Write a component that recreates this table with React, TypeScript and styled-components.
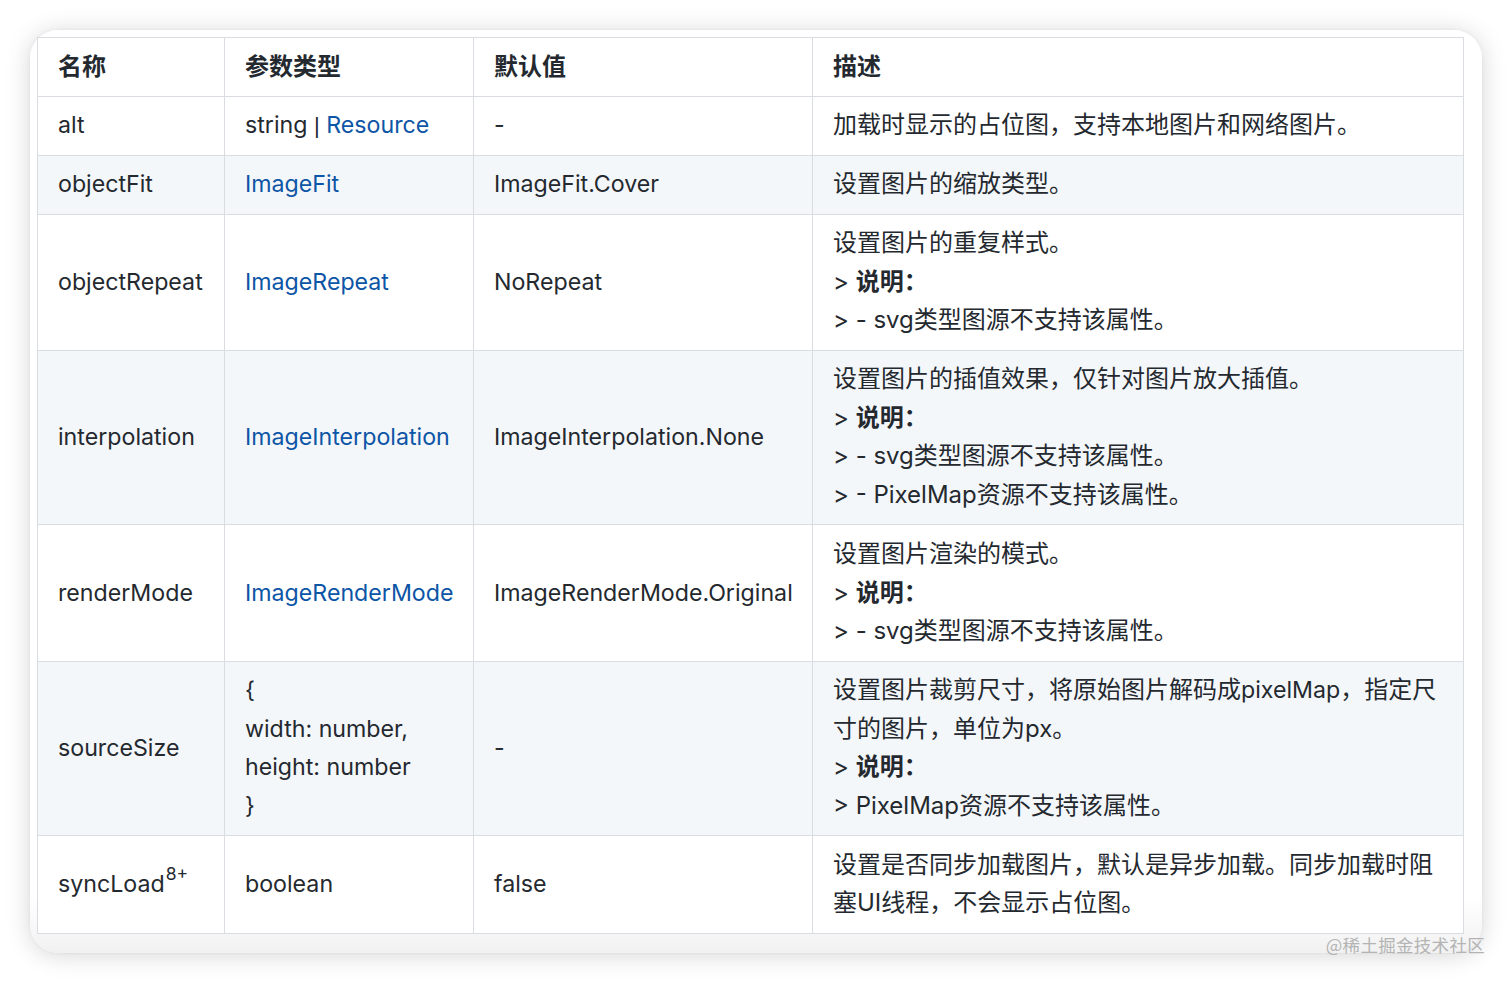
import React from "react";
import styled, { createGlobalStyle } from "styled-components";

const Global = createGlobalStyle`
  html, body { margin: 0; padding: 0; background: #ffffff; }
  body { font-family: Inter, "Noto Sans CJK SC", sans-serif; }
`;

const Page = styled.div`
  width: 1512px;
  height: 984px;
  padding: 30px 0 0 30px;
  box-sizing: border-box;
  background: #ffffff;
`;

const Card = styled.div`
  position: relative;
  width: 1452px;
  height: 923px;
  box-sizing: border-box;
  padding: 7px 19px 20px 7px;
  border-radius: 28px;
  background: linear-gradient(to bottom, #ffffff 0%, #ffffff 94%, #f1f1f1 100%);
  box-shadow: 0 2px 24px rgba(0, 0, 0, 0.17), 0 0 3px rgba(0, 0, 0, 0.06);
`;

const Table = styled.table`
  width: 1426px;
  border-collapse: collapse;
  table-layout: fixed;
  color: #24292f;
  font-family: Inter, "Noto Sans CJK SC", sans-serif;
  font-size: 23.2px;
  line-height: 38.6px;
`;

const Row = styled.tr<{ $striped?: boolean }>`
  background: ${(p) => (p.$striped ? "#f4f7fa" : "#ffffff")};
`;

const Th = styled.th`
  text-align: left;
  font-weight: 700;
  font-size: 24px;
  padding: 9.5px 20px 9.8px 20px;
  border: 1px solid #d9dde2;
  color: #24292f;
`;

const Td = styled.td`
  padding: 9.5px 20px 9.8px 20px;
  border: 1px solid #d9dde2;
  vertical-align: middle;
  white-space: nowrap;
`;

const DescTd = styled(Td)`
  white-space: normal;
  font-size: 24px;
`;

const Line = styled.div``;

const Latin = styled.span`
  font-size: 23.2px;
  line-height: 1;
`;

const Link = styled.span`
  color: #0d55a6;
`;

const Bar = styled.span`
  font-family: "Liberation Sans", sans-serif;
  font-size: 22px;
  line-height: 1;
`;

const Strong = styled.strong`
  font-weight: 700;
`;

const Sup = styled.sup`
  font-size: 17.5px;
  line-height: 0;
  position: relative;
  top: -3px;
  margin-left: 1px;
`;

const Watermark = styled.div`
  position: absolute;
  right: -3px;
  bottom: -4px;
  font-size: 17.5px;
  line-height: 24px;
  color: #b4b4b4;
  letter-spacing: 0.3px;
  font-family: "Noto Sans CJK SC", sans-serif;
`;

type RowData = {
  name: React.ReactNode;
  type: React.ReactNode;
  def: string;
  desc: React.ReactNode;
};

const note = (
  <Line>
    &gt; <Strong>说明：</Strong>
  </Line>
);

const rows: RowData[] = [
  {
    name: "alt",
    type: (
      <>
        string <Bar>|</Bar> <Link>Resource</Link>
      </>
    ),
    def: "-",
    desc: <Line>加载时显示的占位图，支持本地图片和网络图片。</Line>,
  },
  {
    name: "objectFit",
    type: <Link>ImageFit</Link>,
    def: "ImageFit.Cover",
    desc: <Line>设置图片的缩放类型。</Line>,
  },
  {
    name: "objectRepeat",
    type: <Link>ImageRepeat</Link>,
    def: "NoRepeat",
    desc: (
      <>
        <Line>设置图片的重复样式。</Line>
        {note}
        <Line>&gt; - svg类型图源不支持该属性。</Line>
      </>
    ),
  },
  {
    name: "interpolation",
    type: <Link>ImageInterpolation</Link>,
    def: "ImageInterpolation.None",
    desc: (
      <>
        <Line>设置图片的插值效果，仅针对图片放大插值。</Line>
        {note}
        <Line>&gt; - svg类型图源不支持该属性。</Line>
        <Line>&gt; - PixelMap资源不支持该属性。</Line>
      </>
    ),
  },
  {
    name: "renderMode",
    type: <Link>ImageRenderMode</Link>,
    def: "ImageRenderMode.Original",
    desc: (
      <>
        <Line>设置图片渲染的模式。</Line>
        {note}
        <Line>&gt; - svg类型图源不支持该属性。</Line>
      </>
    ),
  },
  {
    name: "sourceSize",
    type: (
      <>
        <Line>{"{"}</Line>
        <Line>width: number,</Line>
        <Line>height: number</Line>
        <Line>{"}"}</Line>
      </>
    ),
    def: "-",
    desc: (
      <>
        <Line>
          设置图片裁剪尺寸，将原始图片解码成<Latin>pixelMap</Latin>，指定尺寸的图片，单位为px。
        </Line>
        {note}
        <Line>&gt; PixelMap资源不支持该属性。</Line>
      </>
    ),
  },
  {
    name: (
      <>
        syncLoad<Sup>8+</Sup>
      </>
    ),
    type: "boolean",
    def: "false",
    desc: <Line>设置是否同步加载图片，默认是异步加载。同步加载时阻塞UI线程，不会显示占位图。</Line>,
  },
];

export default function App() {
  return (
    <>
      <Global />
      <Page>
        <Card>
          <Table>
            <colgroup>
              <col style={{ width: 187 }} />
              <col style={{ width: 249 }} />
              <col style={{ width: 339 }} />
              <col style={{ width: 651 }} />
            </colgroup>
            <thead>
              <Row>
                <Th>名称</Th>
                <Th>参数类型</Th>
                <Th>默认值</Th>
                <Th>描述</Th>
              </Row>
            </thead>
            <tbody>
              {rows.map((r, i) => (
                <Row key={i} $striped={i % 2 === 1}>
                  <Td>{r.name}</Td>
                  <Td>{r.type}</Td>
                  <Td>{r.def}</Td>
                  <DescTd>{r.desc}</DescTd>
                </Row>
              ))}
            </tbody>
          </Table>
          <Watermark>@稀土掘金技术社区</Watermark>
        </Card>
      </Page>
    </>
  );
}
